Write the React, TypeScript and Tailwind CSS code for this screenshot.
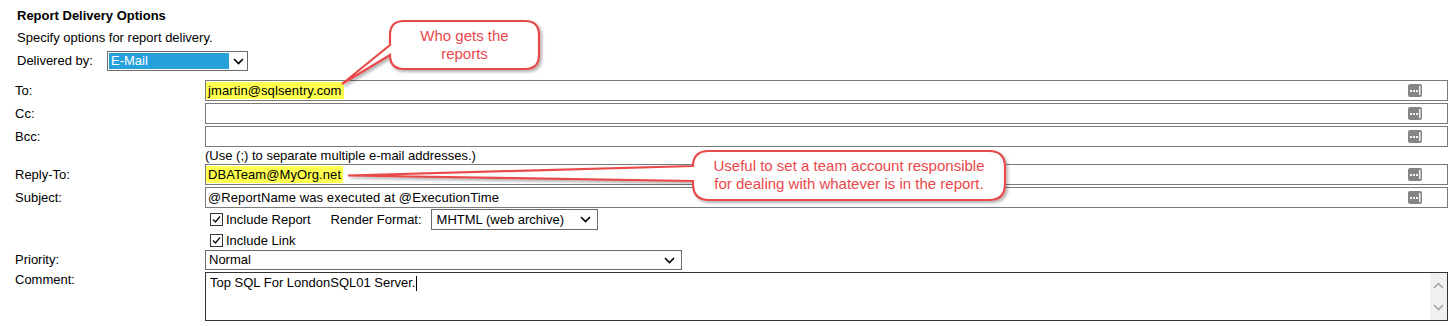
import React from 'react';

const Chevron = ({ color = '#000' }: { color?: string }) => (
  <svg width="11" height="7" viewBox="0 0 11 7">
    <path d="M1 1l4.5 4.5L10 1" fill="none" stroke={color} strokeWidth="1.6" />
  </svg>
);

const DotsButton = () => (
  <span className="flex h-[13px] w-[14px] shrink-0 rounded-[2px] bg-[#858585]">
    <svg width="14" height="13" viewBox="0 0 14 13">
      <rect x="2" y="6" width="2" height="2" fill="#f4f4f4" />
      <rect x="5" y="6" width="2" height="2" fill="#f4f4f4" />
      <rect x="8" y="6" width="2" height="2" fill="#f4f4f4" />
      <rect x="11" y="2" width="1.5" height="9" fill="#f4f4f4" />
    </svg>
  </span>
);

const Field = ({ value, highlight }: { value?: string; highlight?: boolean }) => (
  <div className="flex h-[21px] flex-1 items-center border border-[#7a7a7a] bg-white pl-[0px] pr-[25px]">
    <div className="flex-1 overflow-hidden whitespace-nowrap">
      {value && (
        <span className={highlight ? 'inline-block h-[17px] bg-[#ffff4f] px-[2px] leading-[17px] tracking-[0.1px]' : 'inline-block px-[2px] leading-[17px] tracking-[0.1px]'}>
          {value}
        </span>
      )}
    </div>
    <DotsButton />
  </div>
);

const Check = () => (
  <span className="flex h-[13px] w-[13px] shrink-0 items-center justify-center border border-[#333] bg-white">
    <svg width="11" height="11" viewBox="0 0 11 11">
      <path d="M2 5.5l2.5 2.5L9 2.5" fill="none" stroke="#111" strokeWidth="1.4" />
    </svg>
  </span>
);

const Row = ({ label, children, top }: { label: string; children: React.ReactNode; top?: boolean }) => (
  <div className={top ? 'flex items-start' : 'flex items-center'}>
    <div className={top ? 'w-[190px] shrink-0 leading-[16px]' : 'w-[190px] shrink-0'}>{label}</div>
    {children}
  </div>
);

export default function App() {
  return (
    <div className="relative h-[326px] w-[1453px] overflow-hidden bg-white font-['Liberation_Sans',Arial,sans-serif] text-[13px] text-black">
      <div className="pl-[17px] pt-[8px]">
        <div className="h-[16px] font-bold leading-[16px]">Report Delivery Options</div>
        <div className="mt-[6px] h-[16px] leading-[16px]">Specify options for report delivery.</div>
        <div className="mt-[5px] flex h-[20px] items-center">
          <span className="w-[90px]">Delivered by:</span>
          <div className="flex h-[20px] w-[141px] items-center border border-[#6b6b6b] bg-white">
            <div className="ml-[1px] flex h-[16px] w-[120px] items-center bg-[#26a0da] pl-[2px] text-white">E-Mail</div>
            <div className="flex flex-1 items-center justify-center">
              <Chevron />
            </div>
          </div>
        </div>
      </div>

      <div className="mt-[9px] flex flex-col pl-[15px] pr-[5px]">
        <Row label="To:">
          <Field value="jmartin@sqlsentry.com" highlight />
        </Row>
        <div className="mt-[2px]">
          <Row label="Cc:">
            <Field />
          </Row>
        </div>
        <div className="mt-[2px]">
          <Row label="Bcc:">
            <Field />
          </Row>
        </div>
        <div className="flex h-[17px] items-center pl-[190px] pt-[1px]">(Use (;) to separate multiple e-mail addresses.)</div>
        <Row label="Reply-To:">
          <Field value="DBATeam@MyOrg.net" highlight />
        </Row>
        <div className="mt-[2px]">
          <Row label="Subject:">
            <Field value="@ReportName was executed at @ExecutionTime" />
          </Row>
        </div>
        <div className="mt-[1px] flex h-[21px] items-center pl-[195px]">
          <Check />
          <span className="ml-[3px]">Include Report</span>
          <span className="ml-[20px]">Render Format:</span>
          <div className="ml-[9px] flex h-[21px] w-[167px] items-center border border-[#6b6b6b] bg-white pl-[5px] pr-[6px]">
            <span className="flex-1">MHTML (web archive)</span>
            <Chevron />
          </div>
        </div>
        <div className="flex h-[20px] items-center pl-[195px] pt-[1px]">
          <Check />
          <span className="ml-[3px]">Include Link</span>
        </div>
        <Row label="Priority:">
          <div className="flex h-[20px] w-[477px] items-center border border-[#6b6b6b] bg-white pl-[3px] pr-[6px]">
            <span className="flex-1">Normal</span>
            <Chevron />
          </div>
        </Row>
        <div className="mt-[2px]">
          <Row label="Comment:" top>
            <div className="flex h-[49px] flex-1 border border-[#333] bg-white">
              <div className="flex flex-1 items-start pl-[4px] pt-[2px] leading-[16px]">
                <span>Top SQL For LondonSQL01 Server.</span>
                <span className="ml-[1px] mt-[1px] h-[15px] w-[1px] bg-black" />
              </div>
              <div className="flex w-[17px] flex-col items-center justify-between bg-[#f0f0f0] py-[9px]">
                <svg width="11" height="7" viewBox="0 0 11 7">
                  <path d="M1 6l4.5-4.5L10 6" fill="none" stroke="#a3a3a3" strokeWidth="1.5" />
                </svg>
                <Chevron color="#a3a3a3" />
              </div>
            </div>
          </Row>
        </div>
      </div>

      <svg className="pointer-events-none absolute left-0 top-0" width="1453" height="326" viewBox="0 0 1453 326">
        <defs>
          <filter id="sh" x="-10%" y="-10%" width="130%" height="140%">
            <feDropShadow dx="2" dy="2" stdDeviation="1.6" floodColor="#000" floodOpacity="0.3" />
          </filter>
        </defs>
        <path
          d="M404 21 H525 Q539 21 539 35 V55 Q539 69 525 69 H404 Q390 69 390 55 L342 84 L390 45 V35 Q390 21 404 21 Z"
          fill="#fff"
          stroke="#e84a4a"
          strokeWidth="2.2"
          filter="url(#sh)"
        />
        <path
          d="M709 151 H989 Q1005 151 1005 167 V184 Q1005 200 989 200 H709 Q693 200 693 184 V181 L348 175.5 L693 166 Q693 151 709 151 Z"
          fill="#fff"
          stroke="#e84a4a"
          strokeWidth="2.2"
          filter="url(#sh)"
        />
      </svg>
      <div className="absolute left-[390px] top-[27px] w-[149px] text-center text-[15px] leading-[18px] text-[#e8474b]">
        Who gets the
        <br />
        reports
      </div>
      <div className="absolute left-[693px] top-[157px] w-[312px] text-center text-[15px] leading-[18px] text-[#e8474b]">
        Useful to set a team account responsible
        <br />
        for dealing with whatever is in the report.
      </div>
    </div>
  );
}
